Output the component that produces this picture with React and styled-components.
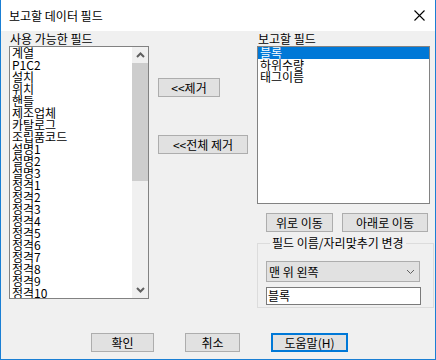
import styled, { createGlobalStyle } from 'styled-components'

const GlobalStyle = createGlobalStyle`
  html, body {
    margin: 0;
    padding: 0;
    background: #f0f0f0;
  }
  * {
    box-sizing: border-box;
  }
`

const Window = styled.div`
  width: 436px;
  height: 360px;
  display: flex;
  flex-direction: column;
  border: 1px solid #1a7fd4;
  border-top: none;
  background: #f0f0f0;
  font-family: "Noto Sans CJK KR", "Noto Sans", sans-serif;
  font-size: 12px;
  color: #000;
  overflow: hidden;
`

const TitleBar = styled.div`
  height: 31px;
  background: #fff;
  display: flex;
  align-items: center;
  justify-content: space-between;
  padding: 0 10px 0 8px;
  font-size: 12px;
  line-height: 14px;
`

const Body = styled.div`
  flex: 1;
  display: flex;
  flex-direction: column;
  padding: 1px 0 0 8px;
`

const Main = styled.div`
  display: flex;
  align-items: flex-start;
`

const Column = styled.div`
  display: flex;
  flex-direction: column;
  width: ${(p) => p.$width}px;
`

const Label = styled.div`
  height: 14px;
  line-height: 14px;
  padding-left: ${(p) => p.$indent || 1}px;
  white-space: nowrap;
`

const ListBox = styled.div`
  display: flex;
  height: ${(p) => p.$height}px;
  border: 1px solid #828282;
  background: #fff;
  overflow: hidden;
`

const Items = styled.div`
  flex: 1;
  overflow: hidden;
`

const Item = styled.div`
  height: 12px;
  line-height: 12px;
  padding-left: 2px;
  white-space: nowrap;
  background: ${(p) => (p.$selected ? '#0078d7' : 'transparent')};
  color: ${(p) => (p.$selected ? '#fff' : '#000')};
`

const ScrollBar = styled.div`
  width: 16px;
  display: flex;
  flex-direction: column;
  background: #f0f0f0;
`

const ScrollArrow = styled.div`
  height: 16px;
  display: flex;
  align-items: center;
  justify-content: center;
`

const Thumb = styled.div`
  height: ${(p) => p.$height}px;
  background: #cdcdcd;
`

const Track = styled.div`
  flex: 1;
`

const Button = styled.button`
  width: ${(p) => p.$width}px;
  height: 19px;
  margin: ${(p) => p.$margin || '0'};
  padding: 0;
  font-family: inherit;
  font-size: 12px;
  line-height: 14px;
  color: #000;
  background: #e1e1e1;
  border: 1px solid #adadad;
  border-radius: 0;
  display: flex;
  align-items: center;
  justify-content: center;
  white-space: nowrap;
`

const DefaultButton = styled(Button)`
  border: 2px solid #0078d7;
`

const ButtonRow = styled.div`
  display: flex;
  gap: ${(p) => p.$gap}px;
  margin: ${(p) => p.$margin};
`

const GroupBox = styled.fieldset`
  width: 177px;
  margin: 5px 0 0 0;
  padding: 12px 0 2px 8px;
  border: 1px solid #dcdcdc;
  min-width: 0;
`

const Legend = styled.legend`
  margin-left: 4px;
  padding: 0 2px;
  line-height: 12px;
  height: 12px;
  white-space: nowrap;
`

const Combo = styled.div`
  width: 154px;
  height: 21px;
  background: #e1e1e1;
  border: 1px solid #adadad;
  display: flex;
  align-items: center;
  justify-content: space-between;
  padding: 0 4px 0 2px;
  line-height: 14px;
`

const TextField = styled.div`
  width: 155px;
  height: 18px;
  margin-top: 5px;
  background: #fff;
  border: 1px solid #7a7a7a;
  padding-left: 1px;
  line-height: 15px;
`

const Chevron = ({ up, color = '#606060', width = 2 }) => (
  <svg width="9" height="6" viewBox="0 0 9 6">
    <polyline
      points={up ? '1,5 4.5,1.5 8,5' : '1,1 4.5,4.5 8,1'}
      fill="none"
      stroke={color}
      strokeWidth={width}
    />
  </svg>
)

const CloseIcon = () => (
  <svg width="11" height="11" viewBox="0 0 11 11">
    <path d="M0.5 0.5 L10.5 10.5 M10.5 0.5 L0.5 10.5" stroke="#000" strokeWidth="1.1" />
  </svg>
)

const available = [
  '계열', 'P1C2', '설치', '위치', '핸들', '제조업체', '카탈로그', '조립품코드',
  '설명1', '설명2', '설명3', '정격1', '정격2', '정격3', '정격4', '정격5',
  '정격6', '정격7', '정격8', '정격9', '정격10',
]

const reported = ['블록', '하위수량', '태그이름']

export default function App() {
  return (
    <>
      <GlobalStyle />
      <Window>
        <TitleBar>
          <span>보고할 데이터 필드</span>
          <CloseIcon />
        </TitleBar>
        <Body>
          <Main>
            <Column $width={140}>
              <Label $indent={1}>사용 가능한 필드</Label>
              <ListBox $height={253}>
                <Items>
                  {available.map((f) => (
                    <Item key={f}>{f}</Item>
                  ))}
                </Items>
                <ScrollBar>
                  <ScrollArrow><Chevron up /></ScrollArrow>
                  <Thumb $height={118} />
                  <Track />
                  <ScrollArrow><Chevron /></ScrollArrow>
                </ScrollBar>
              </ListBox>
            </Column>
            <Column $width={99} style={{ marginLeft: 9 }}>
              <Button $width={62} $margin="46px 0 0 0">&lt;&lt;제거</Button>
              <Button $width={90} $margin="38px 0 0 0">&lt;&lt;전체 제거</Button>
            </Column>
            <Column $width={177}>
              <Label $indent={0}>보고할 필드</Label>
              <ListBox $height={158} style={{ width: 173 }}>
                <Items style={{ paddingTop: 0 }}>
                  {reported.map((f, i) => (
                    <Item key={f} $selected={i === 0}>{f}</Item>
                  ))}
                </Items>
              </ListBox>
              <ButtonRow $gap={9} $margin="9px 0 0 9px">
                <Button $width={67}>위로 이동</Button>
                <Button $width={86}>아래로 이동</Button>
              </ButtonRow>
              <GroupBox>
                <Legend>필드 이름/자리맞추기 변경</Legend>
                <Combo>
                  <span>맨 위 왼쪽</span>
                  <Chevron width={1} />
                </Combo>
                <TextField>블록</TextField>
              </GroupBox>
            </Column>
          </Main>
          <ButtonRow $gap={31} $margin="25px 0 0 82px">
            <Button $width={63}>확인</Button>
            <Button $width={55}>취소</Button>
            <DefaultButton $width={77}>도움말(H)</DefaultButton>
          </ButtonRow>
        </Body>
      </Window>
    </>
  )
}
